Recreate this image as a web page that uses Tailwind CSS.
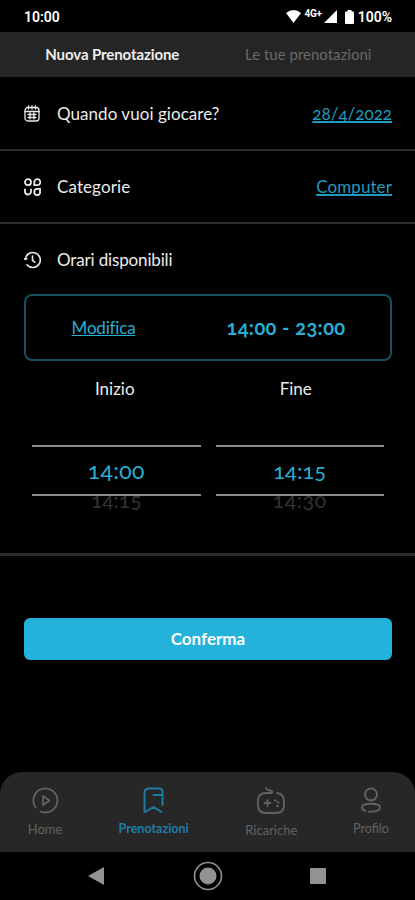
<!DOCTYPE html>
<html lang="it">
<head>
  <meta charset="UTF-8" />
  <meta name="viewport" content="width=device-width, initial-scale=1.0" />
  <title>Nuova Prenotazione</title>
  <script src="https://cdn.jsdelivr.net/npm/@tailwindcss/browser@4"></script>
</head>
<body class="bg-black text-[#ececec] font-['Lato',sans-serif]">
  <div class="w-[415px] h-[900px] flex flex-col overflow-hidden whitespace-nowrap">

    <!-- Status bar -->
    <div class="h-8 shrink-0 flex items-center justify-between pl-6 pr-[23px] pt-px font-['Roboto',sans-serif] font-semibold text-sm text-white">
      <span>10:00</span>
      <div class="flex items-center">
        <svg class="w-[15px] h-[13px]" viewBox="0 0 15 13" fill="currentColor"><path d="M0 3Q7.500-3 15 3L7.500 13Z"/></svg>
        <span class="ml-1 mb-1.5 text-[10px] leading-none tracking-[-0.3px] font-bold">4G+</span>
        <svg class="ml-[2px] w-[13px] h-[13px]" viewBox="0 0 13 13" fill="currentColor"><path d="M13 0V13H0Z"/></svg>
        <svg class="ml-2 w-[9px] h-[14px]" viewBox="0 0 9 14" fill="currentColor"><path d="M2.500 0h4v1.500H8q1 0 1 1V13q0 1-1 1H1q-1 0-1-1V2.500q0-1 1-1h1.500Z"/></svg>
        <span class="ml-1">100%</span>
      </div>
    </div>

    <!-- Tabs -->
    <div class="h-[45px] shrink-0 bg-[#252525] grid grid-cols-2 items-center text-center text-[15px]">
      <span class="pl-[17px] font-bold tracking-[-0.1px] text-[#eee]">Nuova Prenotazione</span>
      <span class="pr-[6px] text-[#686868]">Le tue prenotazioni</span>
    </div>

    <!-- Date -->
    <div class="h-[74px] shrink-0 flex items-center border-b-2 border-[#2c2c2c] pl-6 pr-[23px] pt-px text-[17px]">
      <svg class="w-4 h-[17px] mr-[17px]" viewBox="0 0 16 17" fill="none" stroke="currentColor" stroke-width="1.300" stroke-linecap="round">
        <rect x="1" y="2.500" width="14" height="13.500" rx="3"/>
        <path d="M4.500 1v3M8 1v3M11.500 1v3M1 6.500h14M4 9.500h8M4 12.500h8M6 8v6M10 8v6"/>
      </svg>
      <span class="tracking-[0.05px]">Quando vuoi giocare?</span>
      <a class="ml-auto text-[#2299bd] underline decoration-2 underline-offset-1 [text-decoration-skip-ink:none] [font-feature-settings:'onum']">28/4/2022</a>
    </div>

    <!-- Category -->
    <div class="h-[73px] shrink-0 flex items-center border-b-2 border-[#2c2c2c] pl-6 pr-[23px] text-[17px]">
      <svg class="w-[17px] h-[18px] mr-4" viewBox="0 0 17 18" fill="none" stroke="currentColor" stroke-width="1.800">
        <circle cx="4" cy="4.200" r="3"/>
        <path d="M10.300 7.200V4.200a3 3 0 1 1 3 3ZM1 10.800V13.500a3 3 0 0 0 6 0V10.800M10.300 13.800a3 3 0 0 1 3-3h2.700v3a2.900 2.900 0 1 1-5.700 0Z"/>
      </svg>
      <span class="tracking-[0.1px]">Categorie</span>
      <a class="ml-auto text-[#2299bd] tracking-[0.1px] underline decoration-2 underline-offset-1 [text-decoration-skip-ink:none]">Computer</a>
    </div>

    <!-- Available hours -->
    <div class="h-[332px] shrink-0 border-b-[3px] border-[#2c2c2c] flex flex-col">
      <div class="h-[70px] shrink-0 flex items-center pl-6 pt-px text-[17px]">
        <svg class="w-[17px] h-[18px] mr-4" viewBox="0 0 17 18" fill="none" stroke="currentColor" stroke-width="1.600" stroke-linecap="round" stroke-linejoin="round">
          <path d="M1.300 8.500A7.500 7.500 0 1 1 3 13.800M1.300 8.500l-.6-.9M1.300 8.500l1.500-.7M8.500 5v4.500l2.300 1.600"/>
        </svg>
        <span class="tracking-[-0.15px]">Orari disponibili</span>
      </div>

      <div class="ml-6 mr-[23px] h-[67px] shrink-0 border-2 border-[#174f60] rounded-lg grid grid-cols-[155px_1fr] items-center text-center text-[#28aed5]">
        <a class="pt-px text-[17px] tracking-[-0.2px] underline underline-offset-1 [text-decoration-skip-ink:none]">Modifica</a>
        <span class="text-[20px] leading-6 pb-0.5 pl-px tracking-[0.4px] font-bold [font-feature-settings:'onum']">14:00 - 23:00</span>
      </div>

      <!-- Time pickers -->
      <div class="grid grid-cols-2 gap-[15px] pl-8 pr-[31px] pt-[16px] text-center">
        <div>
          <div class="text-[17px] leading-6 pr-[3px]">Inizio</div>
          <div class="mt-[44px] h-[51px] border-y-2 border-[#8b898a] text-[23px] leading-[47px] text-[#28aed5] tracking-[0.3px] [font-feature-settings:'onum']">14:00</div>
          <div class="h-6 overflow-hidden text-[21px] text-[#333]"><div class="-mt-[10px] leading-7 [font-feature-settings:'onum']">14:15</div></div>
        </div>
        <div>
          <div class="text-[17px] leading-6 pr-[8px]">Fine</div>
          <div class="mt-[44px] h-[51px] border-y-2 border-[#8b898a] text-[22px] leading-[48px] text-[#28aed5] [font-feature-settings:'onum']">14:15</div>
          <div class="h-6 overflow-hidden text-[21px] text-[#333]"><div class="-mt-[10px] leading-7 tracking-[0.7px] [font-feature-settings:'onum']">14:30</div></div>
        </div>
      </div>
    </div>

    <button class="mt-[62px] ml-6 mr-[23px] h-[42px] shrink-0 rounded-md bg-[#24b2da] text-white font-bold text-[17px]">Conferma</button>

    <!-- Bottom navigation -->
    <div class="mt-auto h-20 shrink-0 bg-[#272727] rounded-t-[22px] flex justify-between pl-[27px] pr-[26px] pt-[15px] text-[13px] leading-4 text-[#626262]">
      <div class="w-9 flex flex-col items-center gap-[7px]">
        <svg class="w-[27px] h-[27px]" viewBox="0 0 27 27" fill="none" stroke="currentColor" stroke-width="1.800" stroke-linecap="round" stroke-linejoin="round"><path d="M3.700 20.500A12 12 0 1 1 9 24.600M11 9v9l6.500-4.500Z"/></svg>
        <span>Home</span>
      </div>
      <div class="w-[72px] flex flex-col items-center gap-[7px] text-[#1d7da5]">
        <svg class="w-[27px] h-[27px]" viewBox="0 0 27 27" fill="none" stroke="currentColor" stroke-width="2" stroke-linecap="round" stroke-linejoin="round"><path d="M22.500 18V5q0-3.500-3.500-3.500H9q-4.500 0-4.500 4.500V24q0 1.500 1.500.5l7.500-4.500 8 5M22.500 8H13.500"/></svg>
        <span class="font-bold text-[12.5px]">Prenotazioni</span>
      </div>
      <div class="w-[54px] flex flex-col items-center gap-2">
        <svg class="w-[28px] h-[27px]" viewBox="0 0 28 27" fill="none" stroke="currentColor" stroke-width="1.900" stroke-linecap="round" stroke-linejoin="round"><path d="M9 1q1 2.500 4 2.500 3 0 2 2.500H9Q1 6 1 14v4q0 8 8 8h10q8 0 8-8v-4q0-7-7-8M7.500 16h6M10.500 13v6M18 13.500h1M21 15.500h.5M20 19h1"/></svg>
        <span>Ricariche</span>
      </div>
      <div class="w-9 flex flex-col items-center gap-[7px]">
        <svg class="w-[22px] h-[27px]" viewBox="0 0 22 27" fill="none" stroke="currentColor" stroke-width="1.900" stroke-linecap="round"><circle cx="11" cy="7.500" r="6"/><path d="M5.500 23.800Q2 23 2 20.500 2 16.800 11 16.800T20 20.500Q20 24.800 9 24.800"/></svg>
        <span class="text-[12.5px]">Profilo</span>
      </div>
    </div>

    <!-- System navigation -->
    <div class="h-12 shrink-0 flex items-center pl-[88px] text-[#929292]">
      <svg class="w-4 h-[18px]" viewBox="0 0 16 18" fill="currentColor"><path d="M16 0V18L0 9Z"/></svg>
      <svg class="ml-[89px] w-[30px] h-[30px]" viewBox="0 0 30 30"><circle cx="15" cy="15" r="13.500" fill="none" stroke="currentColor" stroke-width="1.600"/><circle cx="15" cy="15" r="8.500" fill="currentColor"/></svg>
      <div class="ml-[87px] w-4 h-4 bg-[#929292] rounded-[1px]"></div>
    </div>
  </div>
</body>
</html>
